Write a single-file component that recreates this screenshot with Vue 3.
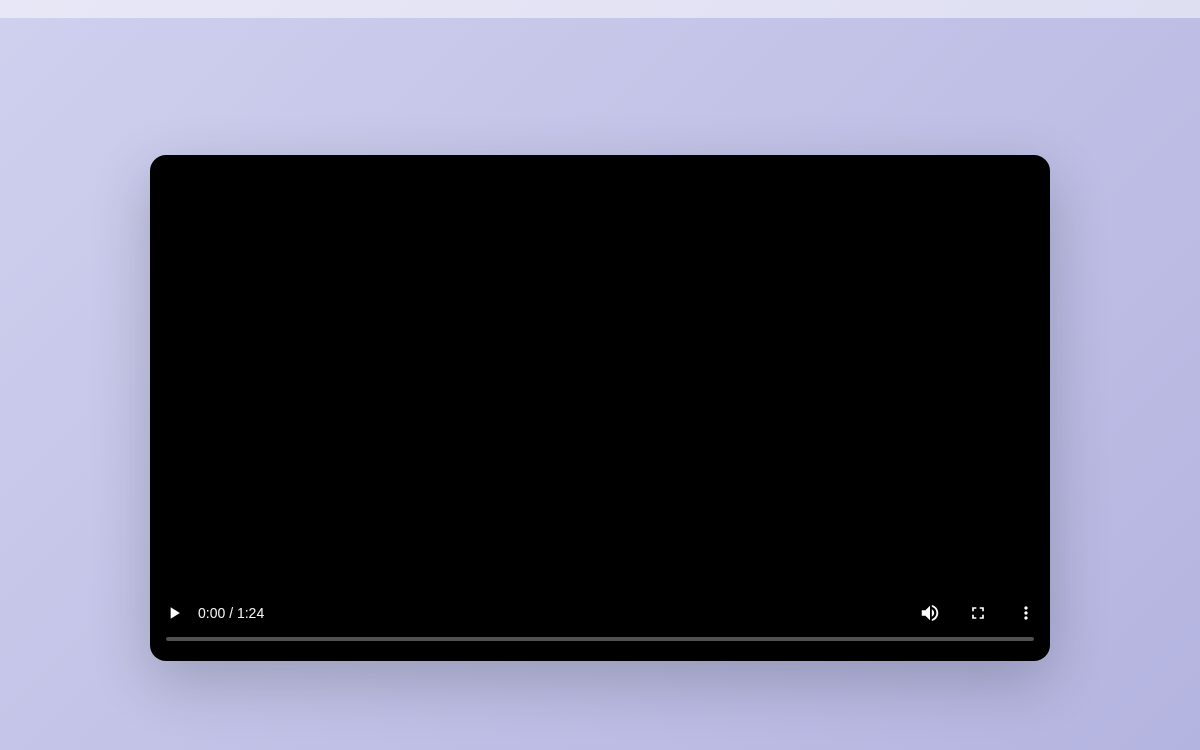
<template>
  <div class="page">
    <div class="top-bar"></div>
    <div class="stage">
      <div class="player">
        <div class="screen"></div>
        <div class="controls">
          <div class="button-row">
            <button class="ctrl">
              <svg width="20" height="20" viewBox="0 0 24 24"><path d="M8 5v14l11-7z" /></svg>
            </button>
            <span class="time">{{ current }} / {{ duration }}</span>
            <div class="spacer"></div>
            <button class="ctrl">
              <svg width="22" height="22" viewBox="0 0 24 24"><path d="M3 9v6h4l5 5V4L7 9H3zm13.5 3c0-1.77-1.02-3.29-2.5-4.03v8.05c1.48-.73 2.5-2.25 2.5-4.02zM14 3.23v2.06c2.89.86 5 3.54 5 6.71s-2.11 5.85-5 6.71v2.06c4.01-.91 7-4.49 7-8.77s-2.99-7.86-7-8.77z" /></svg>
            </button>
            <button class="ctrl">
              <svg width="20" height="20" viewBox="0 0 24 24"><path d="M7 14H5v5h5v-2H7v-3zm-2-4h2V7h3V5H5v5zm12 7h-3v2h5v-5h-2v3zM14 5v2h3v3h2V5h-5z" /></svg>
            </button>
            <button class="ctrl">
              <svg width="20" height="20" viewBox="0 0 24 24"><path d="M12 8c1.1 0 2-.9 2-2s-.9-2-2-2-2 .9-2 2 .9 2 2 2zm0 2c-1.1 0-2 .9-2 2s.9 2 2 2 2-.9 2-2-.9-2-2-2zm0 6c-1.1 0-2 .9-2 2s.9 2 2 2 2-.9 2-2-.9-2-2-2z" /></svg>
            </button>
          </div>
          <div class="timeline"></div>
        </div>
      </div>
    </div>
  </div>
</template>

<script setup>
const current = '0:00'
const duration = '1:24'
</script>

<style>
html,
body {
  margin: 0;
  height: 100%;
  overflow: hidden;
}
</style>

<style scoped>
.page {
  width: 1200px;
  height: 750px;
  display: flex;
  flex-direction: column;
  background: linear-gradient(135deg, #cfcfee 0%, #b4b4e0 100%);
  font-family: "Liberation Sans", Arial, sans-serif;
}
.top-bar {
  height: 18px;
  flex-shrink: 0;
  background: rgba(255, 255, 255, 0.5);
}
.stage {
  flex: 1;
  display: flex;
  justify-content: center;
  padding-top: 137px;
}
.player {
  width: 900px;
  height: 506px;
  display: flex;
  flex-direction: column;
  background: #000;
  border-radius: 16px;
  overflow: hidden;
  box-shadow: 0 20px 60px rgba(0, 0, 0, 0.2);
}
.screen {
  flex: 1;
}
.controls {
  display: flex;
  flex-direction: column;
  padding-bottom: 20px;
}
.button-row {
  display: flex;
  align-items: center;
  height: 48px;
}
.ctrl {
  width: 48px;
  height: 48px;
  padding: 0;
  border: none;
  background: none;
  display: flex;
  align-items: center;
  justify-content: center;
}
.ctrl svg {
  fill: #fff;
}
.time {
  color: #f4f4f4;
  font-size: 14px;
  will-change: transform;
}
.spacer {
  flex: 1;
}
.timeline {
  height: 4px;
  margin: 0 16px;
  border-radius: 2px;
  background: #515151;
}
</style>
